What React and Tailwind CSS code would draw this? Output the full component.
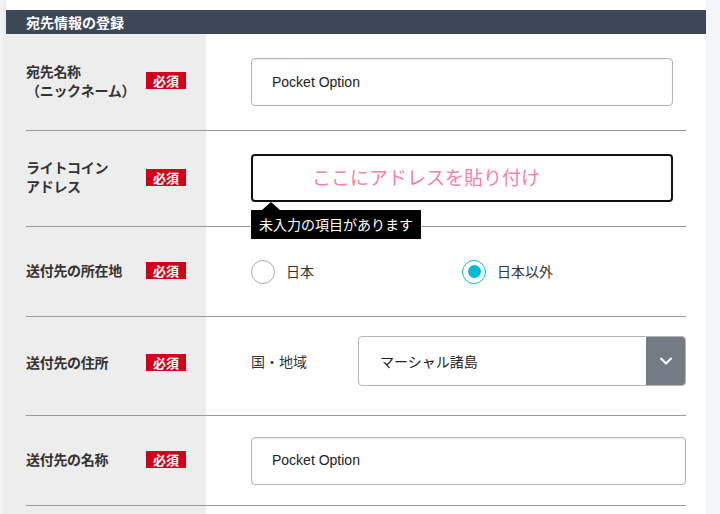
import { ChevronDown } from 'lucide-react';

const jp = { fontFamily: '"Noto Sans CJK JP", "Noto Sans", sans-serif' };

function Badge() {
    return (
        <span className="ml-auto mr-[20px] inline-flex h-[17px] w-[40px] items-center justify-center bg-[#d0021b] text-[13px] font-bold leading-none text-white">
            必須
        </span>
    );
}

function Row({ label, height, lift = 'pb-[3px]', children }) {
    return (
        <div className="flex" style={{ height }}>
            <div className="w-[200px] shrink-0 bg-[#ededed] pl-[20px]">
                <div className={`flex h-full items-center border-b border-[#9a9a9a] ${lift}`}>
                    <div className="text-[14px] font-bold leading-[19px] tracking-[-0.3px] text-[#333]">{label}</div>
                    <Badge />
                </div>
            </div>
            <div className="flex-1 pr-[20px]">
                <div className="relative flex h-full items-center border-b border-[#9a9a9a] pl-[45px]">{children}</div>
            </div>
        </div>
    );
}

function TextBox({ value, wide }) {
    return (
        <div className={`flex h-[48px] items-center rounded-[4px] border border-[#b4b4b4] bg-white pl-[20px] shadow-[inset_0_1px_2px_rgba(0,0,0,0.08)] ${wide ? 'w-full' : 'w-[422px]'}`}>
            <span className="text-[14px] text-[#222]" style={{ fontFamily: '"Liberation Sans", Arial, sans-serif' }}>{value}</span>
        </div>
    );
}

function Radio({ checked, label }) {
    return (
        <div className="flex items-center gap-[11px]">
            <span className={`flex h-[24px] w-[24px] items-center justify-center rounded-full border bg-white ${checked ? 'border-[#12b9d6]' : 'border-[#aaaaaa]'}`}>
                {checked && <span className="h-[13px] w-[13px] rounded-full bg-[#00bcd4]" />}
            </span>
            <span className="text-[14px] text-[#333]">{label}</span>
        </div>
    );
}

export default function App() {
    return (
        <div className="min-h-[514px] bg-[#f5f6fa]" style={jp}>
            <div className="ml-[6px] w-[700px] bg-white pt-[10px] shadow-[-3px_0_5px_rgba(0,0,0,0.06)]">
                <div className="flex h-[24px] items-center bg-[#3c4858] pl-[20px] text-[14px] font-bold text-white">宛先情報の登録</div>

                <Row label={<>宛先名称<br />（ニックネーム）</>} height={97}>
                    <TextBox value="Pocket Option" />
                </Row>

                <Row label={<>ライトコイン<br />アドレス</>} height={96}>
                    <div className="relative -mt-[2px] flex h-[48px] w-[422px] items-center rounded-[4px] border-2 border-[#111] bg-white pl-[59px]">
                        <span className="text-[19px] text-[#f77fa9]">ここにアドレスを貼り付け</span>
                        <div className="absolute left-[-2px] top-[46px] z-10">
                            <div className="ml-[11px] h-0 w-0 border-x-[9px] border-b-[8px] border-x-transparent border-b-black" />
                            <div className="flex h-[29px] w-[170px] items-center bg-black pl-[8px] text-[14px] text-white">未入力の項目があります</div>
                        </div>
                    </div>
                </Row>

                <Row label="送付先の所在地" height={90}>
                    <div className="flex w-full items-center">
                        <div className="w-[211px]"><Radio label="日本" /></div>
                        <Radio checked label="日本以外" />
                    </div>
                </Row>

                <Row label="送付先の住所" height={99} lift="pb-[8px]">
                    <div className="mb-[10px] flex w-full items-center">
                        <span className="w-[107px] text-[14px] text-[#333]">国・地域</span>
                        <div className="flex h-[50px] flex-1 overflow-hidden rounded-[4px] border border-[#b4b4b4] bg-white">
                            <div className="flex flex-1 items-center pl-[21px] text-[14px] text-[#222]">マーシャル諸島</div>
                            <div className="flex w-[39px] items-center justify-center bg-[#737b84]">
                                <ChevronDown className="h-[20px] w-[20px] text-white" strokeWidth={2.5} />
                            </div>
                        </div>
                    </div>
                </Row>

                <Row label="送付先の名称" height={90}>
                    <TextBox value="Pocket Option" wide />
                </Row>

                <div className="flex h-[20px]">
                    <div className="w-[200px] bg-[#ededed]" />
                </div>
            </div>
        </div>
    );
}
